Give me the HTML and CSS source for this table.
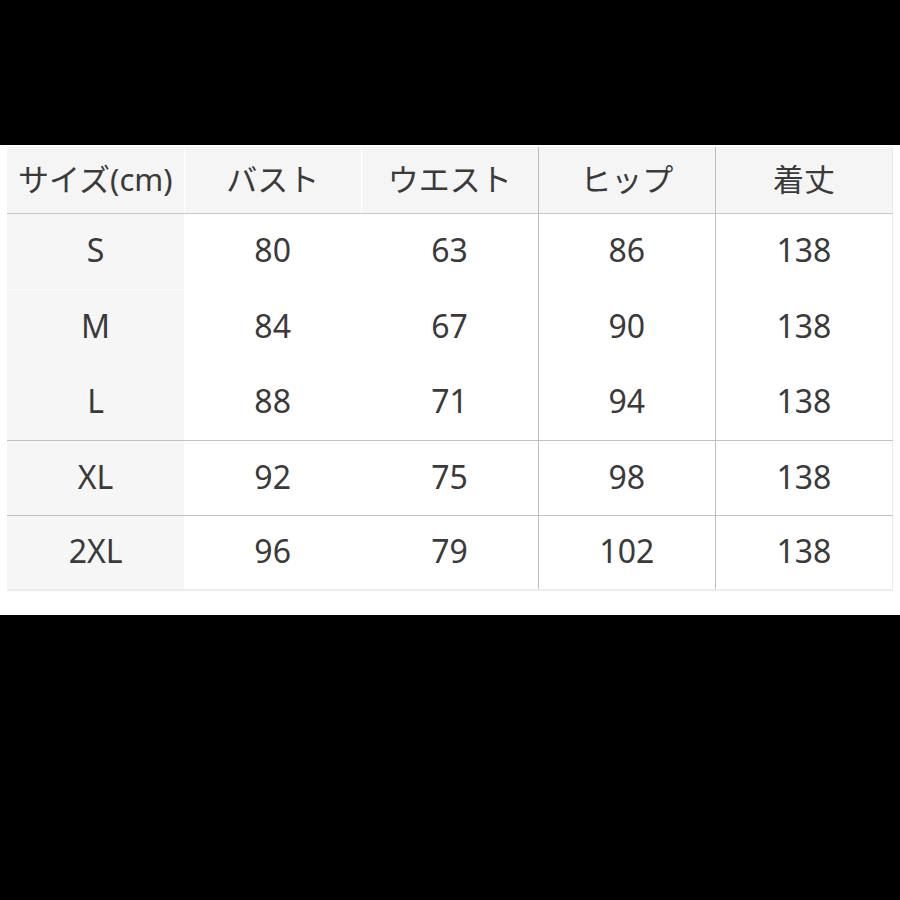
FILE: index.html
```html
<!DOCTYPE html>
<html lang="ja">
<head>
<meta charset="utf-8">
<title>サイズ表</title>
<link rel="stylesheet" href="styles.css">
</head>
<body>
<div class="panel">
  <table class="size-table">
    <thead>
      <tr>
        <th class="c1">サイズ(cm)</th>
        <th class="c2">バスト</th>
        <th class="c3">ウエスト</th>
        <th class="c4">ヒップ</th>
        <th class="c5">着丈</th>
      </tr>
    </thead>
    <tbody>
      <tr class="r-s">
        <td class="c1 key">S</td><td class="c2">80</td><td class="c3">63</td><td class="c4">86</td><td class="c5">138</td>
      </tr>
      <tr class="r-m">
        <td class="c1 key">M</td><td class="c2">84</td><td class="c3">67</td><td class="c4">90</td><td class="c5">138</td>
      </tr>
      <tr class="r-l">
        <td class="c1 key">L</td><td class="c2">88</td><td class="c3">71</td><td class="c4">94</td><td class="c5">138</td>
      </tr>
      <tr class="r-xl ruled">
        <td class="c1 key">XL</td><td class="c2">92</td><td class="c3">75</td><td class="c4">98</td><td class="c5">138</td>
      </tr>
      <tr class="r-2xl ruled">
        <td class="c1 key">2XL</td><td class="c2">96</td><td class="c3">79</td><td class="c4">102</td><td class="c5">138</td>
      </tr>
    </tbody>
  </table>
</div>
</body>
</html>
```

FILE: styles.css
```css
html, body {
  margin: 0;
  padding: 0;
  background: #000;
}

body {
  width: 900px;
  height: 900px;
  padding-top: 145px;
  box-sizing: border-box;
  font-family: "Noto Sans", "Noto Sans CJK JP", sans-serif;
}

.panel {
  background: #fff;
  height: 470px;
  box-sizing: border-box;
  padding: 2px 7px 0 7px;
}

.size-table {
  width: 886px;
  border-collapse: collapse;
  table-layout: fixed;
  color: #3a3a3a;
  font-size: 32px;
  border-right: 1px solid #e8e8e8;
  border-bottom: 2px solid #ececec;
}

.size-table th,
.size-table td {
  padding: 0;
  text-align: center;
  vertical-align: middle;
  font-weight: 400;
  line-height: 1;
}

.size-table th {
  height: 64px;
  font-size: 31px;
  background: #f5f5f5;
  border-bottom: 1px solid #c6c6c6;
  padding-bottom: 2px;
}

.size-table th.c1,
.size-table th.c2 {
  border-right: 1px solid #fff;
}

.size-table td {
  height: 72px;
  background: #fff;
  padding-bottom: 3px;
}

.size-table .ruled td {
  height: 71px;
  border-top: 1px solid #c2c2c2;
}

.size-table .r-2xl td {
  height: 70px;
}

.size-table .key {
  background: #f6f6f6;
}

.size-table .c3 {
  border-right: 1px solid #bdbdbd;
}

.size-table .c4 {
  border-right: 1px solid #bdbdbd;
}

.size-table .r-m .key {
  border-top: 1px solid #fdfdfd;
}
```
